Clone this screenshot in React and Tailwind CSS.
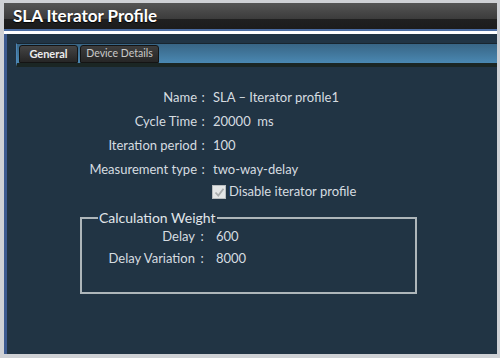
import React from 'react';

// Perfil del iterador SLA: barra de título, pestañas y formulario de solo lectura.

const fields = [
  { label: 'Name', value: 'SLA – Iterator profile1' },
  { label: 'Cycle Time', value: '20000  ms' },
  { label: 'Iteration period', value: '100' },
  { label: 'Measurement type', value: 'two-way-delay' },
];

const weights = [
  { label: 'Delay', value: '600' },
  { label: 'Delay Variation', value: '8000' },
];

function Row({ label, value }) {
  return (
    <div className="flex items-center h-[24px] text-[13px] text-[#d6dce0]">
      <span className="w-[190px] text-right whitespace-nowrap">{label}</span>
      <span className="w-[12px] text-center">:</span>
      <span className="ml-[4px] whitespace-pre">{value}</span>
    </div>
  );
}

function CheckBox() {
  return (
    <span className="w-[14px] h-[14px] bg-[#e4e6e6] border border-[#b8bcbe] flex items-center justify-center">
      <svg width="11" height="11" viewBox="0 0 11 11">
        <path d="M1.5 5.5 L4.3 8.5 L9.5 1.8" fill="none" stroke="#a9acad" strokeWidth="1.8" />
      </svg>
    </span>
  );
}

export default function App() {
  return (
    <div className="w-[500px] h-[358px] bg-[#cfd1d5] pl-[4px] pt-[3px] pr-[3px] pb-[4px] flex flex-col font-['Lato','Open_Sans',sans-serif]">
      {/* barra de título */}
      <div className="h-[26px] shrink-0 bg-[linear-gradient(#555555_0%,#3c3c3c_60%,#202020_61%,#1c1c1c_100%)] flex items-center pl-[9px]">
        <span className="text-white font-bold text-[17px] [text-shadow:0_1px_1px_#000]">SLA Iterator Profile</span>
      </div>
      <div className="h-[2px] shrink-0 bg-[#4b6da3]" />
      <div className="h-[3px] shrink-0 bg-white" />

      <div className="flex-1 bg-[#213444] border-l-[3px] border-[#3c5a90] flex flex-col">
        {/* pestañas */}
        <div className="mt-[9px] ml-[9px] h-[24px] shrink-0 border-t border-[#18252f] border-b-[4px] border-b-[#1b2624] border-l border-l-[#4d86b8] bg-[linear-gradient(#386585,#4a88b2)] flex items-stretch gap-[2px] pl-[2px] pt-[1px]">
          <div className="w-[59px] flex items-center justify-center rounded-t-[3px] border border-[#141414] bg-[linear-gradient(#454545,#262626)] text-[11px] font-bold text-[#ececec]">
            General
          </div>
          <div className="w-[79px] flex items-center justify-center rounded-t-[3px] border border-[#141414] bg-[linear-gradient(#3d3d3d,#262626)] text-[10.5px] text-[#c9c9c9]">
            Device Details
          </div>
        </div>

        {/* formulario */}
        <div className="mt-[19px] flex flex-col">
          {fields.map((f) => (
            <Row key={f.label} {...f} />
          ))}
          <div className="h-[20px] flex items-center ml-[205px] gap-[3px] text-[13px] text-[#d6dce0]">
            <CheckBox />
            <span>Disable iterator profile</span>
          </div>
        </div>

        <fieldset className="mt-[7px] ml-[73px] w-[337px] h-[85px] border-2 border-[#aeb6ba] px-0">
          <legend className="ml-[16px] px-[1px] text-[14px] leading-[18px] text-[#e0e6ea]">Calculation Weight</legend>
          <div className="flex flex-col -mt-[1px]">
            {weights.map((w) => (
              <div key={w.label} className="flex items-center h-[22px] text-[13px] text-[#d6dce0]">
                <span className="w-[113px] text-right whitespace-nowrap">{w.label}</span>
                <span className="w-[14px] text-center">:</span>
                <span className="ml-[7px]">{w.value}</span>
              </div>
            ))}
          </div>
        </fieldset>
      </div>
    </div>
  );
}
